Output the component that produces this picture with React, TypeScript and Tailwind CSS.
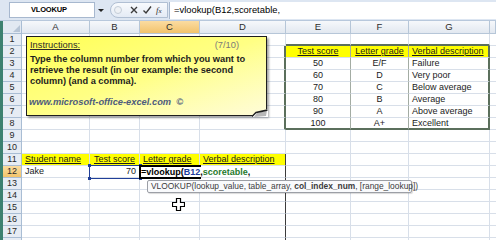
import React from 'react';

type CellDef = {
    text?: React.ReactNode;
    align?: 'l' | 'c' | 'r';
    yellow?: boolean;
    u?: boolean;
};

const COLS = ['A', 'B', 'C', 'D', 'E', 'F', 'G', 'H'];
const ROWS = Array.from({ length: 18 }, (_, i) => i + 1);

const scoreRows: [string, string, string][] = [
    ['50', 'E/F', 'Failure'],
    ['60', 'D', 'Very poor'],
    ['70', 'C', 'Below average'],
    ['80', 'B', 'Average'],
    ['90', 'A', 'Above average'],
    ['100', 'A+', 'Excellent'],
];

const cells: Record<string, CellDef> = {
    E2: { text: 'Test score', align: 'c', yellow: true, u: true },
    F2: { text: 'Letter grade', align: 'c', yellow: true, u: true },
    G2: { text: 'Verbal description', align: 'l', yellow: true, u: true },
    A11: { text: 'Student name', align: 'l', yellow: true, u: true },
    B11: { text: 'Test score', align: 'c', yellow: true, u: true },
    C11: { text: 'Letter grade', align: 'l', yellow: true, u: true },
    D11: { text: 'Verbal description', align: 'l', yellow: true, u: true },
    A12: { text: 'Jake', align: 'l' },
    B12: { text: '70', align: 'r' },
};
scoreRows.forEach(([score, grade, desc], i) => {
    cells[`E${i + 3}`] = { text: score, align: 'c' };
    cells[`F${i + 3}`] = { text: grade, align: 'c' };
    cells[`G${i + 3}`] = { text: desc, align: 'l' };
});

// borders of the cell: right then bottom
const rightBorder = (col: string, row: number) => {
    const inTable = row >= 2 && row <= 8;
    if ((col === 'D' || col === 'G') && inTable) return 'border-r-2 border-r-[#5b6f5c]';
    if (col === 'D' && row >= 11) return 'border-r border-r-[#3c3c3c]';
    if ((col === 'E' || col === 'F') && inTable) return 'border-r border-r-[#a3aca3]';
    return 'border-r border-r-[#d8dfe9]';
};

const bottomBorder = (col: string, row: number) => {
    const tableCol = col === 'E' || col === 'F' || col === 'G';
    if (tableCol && (row === 1 || row === 8)) return 'border-b-2 border-b-[#5b6f5c]';
    return 'border-b border-b-[#d8dfe9]';
};

const Cell: React.FC<{ col: string; row: number }> = ({ col, row }) => {
    const def = cells[`${col}${row}`];
    const align = def?.align === 'c' ? 'justify-center' : def?.align === 'r' ? 'justify-end' : 'justify-start';
    return (
        <div
            className={`relative flex items-center px-[3px] whitespace-nowrap text-[9px] leading-none text-[#1b1b1b] ${align} ${rightBorder(col, row)} ${bottomBorder(col, row)} ${def?.yellow ? 'bg-[#ffff00]' : ''}`}
        >
            {def?.text && <span className={def.u ? 'underline underline-offset-[1px]' : ''}>{def.text}</span>}
            {col === 'C' && row === 12 && (
                <span className="absolute left-[1px] top-[1px] z-20 bg-white pr-[1px] text-[9px] font-bold leading-[10px] text-black">
                    =vlookup(<span className="text-[#1d3c9e]">B12</span>,<span className="text-[#1f7a2c]">scoretable</span>,
                </span>
            )}
        </div>
    );
};

const RowHeader: React.FC<{ row: number }> = ({ row }) => (
    <div className="flex">
        <div className="w-[3px] bg-[#3d8170]" />
        <div
            className={`flex flex-1 items-center justify-center border-r border-b border-[#a9bdd4] text-[9px] leading-none text-[#2a2a2a] ${
                row === 12 ? 'bg-linear-to-b from-[#fbdc9f] to-[#f3c46a]' : 'bg-[#e6ecf4]'
            }`}
        >
            {row < 18 ? row : ''}
        </div>
    </div>
);

const FormulaBar: React.FC = () => (
    <div className="flex h-[21px] items-center bg-[#dde6f2] border-b border-[#b8c8dc]">
        <div className="ml-[9px] flex h-[16px] w-[86px] items-center border border-[#a7b8cf] bg-white pl-[21px]">
            <span className="text-[7.5px] font-semibold leading-none tracking-[-0.2px] text-black">VLOOKUP</span>
        </div>
        <svg width="10" height="10" viewBox="0 0 10 10" className="ml-[1px]">
            <path d="M2 4 L8 4 L5 7 Z" fill="#222" />
        </svg>
        <div className="ml-[4px] flex h-[16px] w-[58px] items-center rounded-l-full border border-[#b0bfd3] bg-linear-to-b from-[#f8fafd] to-[#e4ebf5] pl-[3px]">
            <span className="h-[8px] w-[8px] rounded-full border border-[#c4cdd8] bg-[#eef1f5]" />
            <svg width="10" height="10" viewBox="0 0 10 10" className="ml-[7px]">
                <path d="M2 2 L8 8 M8 2 L2 8" stroke="#3b3b3b" strokeWidth="1.4" />
            </svg>
            <svg width="10" height="10" viewBox="0 0 10 10" className="ml-[3px]">
                <path d="M1.5 5.5 L4 8 L9 1.5" stroke="#3b3b3b" strokeWidth="1.4" fill="none" />
            </svg>
            <span className="ml-[4px] font-['Liberation_Serif',serif] text-[9px] italic leading-none text-[#333]">
                f<span className="text-[7px]">x</span>
            </span>
        </div>
        <div className="ml-[1px] flex h-[17px] flex-1 items-center border-l border-[#a7b8cf] bg-white pl-[4px]">
            <span className="text-[9.4px] leading-none text-black">=vlookup(B12,scoretable,</span>
        </div>
    </div>
);

const Note: React.FC = () => (
    <div className="absolute left-[26px] top-[36px] z-10 h-[80px] w-[241px] border-[1.5px] border-[#1e1e1e] bg-linear-to-br from-[#ffff50] via-[#ffff84] to-[#fffcd8] shadow-[2px_2px_2px_rgba(0,0,0,0.35)]">
        <div className="flex items-center justify-between pl-[3px] pr-[27px] pt-[4px]">
            <span className="text-[9.3px] leading-none text-[#2a2a2a] underline underline-offset-[1px]">Instructions:</span>
            <span className="text-[9.3px] leading-none text-[#7a7a7a]">(7/10)</span>
        </div>
        <p className="mt-[4px] pl-[3px] text-[9.25px] font-bold leading-[11px] text-[#1d1d1d]">
            Type the column number from which you want to
            <br />
            retrieve the result (in our example: the second
            <br />
            column) (and a comma).
        </p>
        <div className="mt-[11px] pl-[2px] text-[9.3px] font-bold italic leading-none text-[#4d5b7d]">
            www.microsoft-office-excel.com&nbsp;&nbsp;©
        </div>
        <svg width="16" height="8" viewBox="0 0 16 8" className="absolute -bottom-[2px] -right-[2px]">
            <path d="M0 8 L4 3 Q9 2 16 0 L16 8 Z" fill="#ffffff" />
            <path d="M2 8 L5 4 Q10 3 15 1.5 L14 7 Z" fill="#b8b8b8" />
            <path d="M0 7.5 L4 3.5 Q9 2.5 15.5 1" stroke="#1e1e1e" strokeWidth="1.4" fill="none" />
        </svg>
    </div>
);

const App: React.FC = () => {
    return (
        <div className="relative h-[240px] w-[496px] overflow-hidden bg-white font-['Liberation_Sans',Arial,sans-serif]">
            <FormulaBar />
            <div className="grid grid-cols-[22px_68px_50px_60px_86px_65px_58px_81px_6px] grid-rows-[13px_repeat(18,12px)]">
                {/* column headers */}
                <div className="flex">
                    <div className="w-[3px] bg-[#3d8170]" />
                    <div className="relative flex-1 border-r border-b border-[#a9bdd4] bg-[#e2e9f2]">
                        <svg width="7" height="7" viewBox="0 0 7 7" className="absolute bottom-[1px] right-[1px]">
                            <path d="M7 0 L7 7 L0 7 Z" fill="#b7c5d6" />
                        </svg>
                    </div>
                </div>
                {COLS.map((c) => (
                    <div
                        key={c}
                        className={`flex items-center justify-center border-r border-b border-[#b6c6d8] text-[9.5px] leading-none text-[#2c2c2c] ${
                            c === 'C' ? 'bg-linear-to-b from-[#fbdca1] to-[#f2c36b]' : 'bg-linear-to-b from-[#f6f8fb] to-[#e2e8f0]'
                        }`}
                    >
                        {c === 'H' ? '' : c}
                    </div>
                ))}
                {ROWS.map((r) => (
                    <React.Fragment key={r}>
                        <RowHeader row={r} />
                        {COLS.map((c) => (
                            <Cell key={c} col={c} row={r} />
                        ))}
                    </React.Fragment>
                ))}
            </div>

            <Note />

            {/* B12 reference highlight */}
            <div className="pointer-events-none absolute left-[89px] top-[165px] z-10 h-[14px] w-[52px] border border-[#213f98]">
                <span className="absolute -left-[2px] -top-[2px] h-[3px] w-[3px] bg-[#213f98]" />
                <span className="absolute -bottom-[2px] -left-[2px] h-[3px] w-[3px] bg-[#213f98]" />
                <span className="absolute -right-[2px] -top-[2px] h-[3px] w-[3px] bg-[#213f98]" />
                <span className="absolute -bottom-[2px] -right-[2px] h-[3px] w-[3px] bg-[#213f98]" />
            </div>

            {/* active cell C12 */}
            <div className="pointer-events-none absolute left-[139px] top-[165px] z-10 h-[14px] w-[62px] border-2 border-black" />

            {/* function tooltip */}
            <div className="absolute left-[147px] top-[180px] z-30 h-[13px] w-[265px] whitespace-nowrap rounded-[2px] border border-[#9c9fa6] bg-[#f9fafc] pl-[3px] text-[8.4px] leading-[11px] text-[#3c3c3c] shadow-[1px_1px_1px_rgba(0,0,0,0.15)]">
                VLOOKUP(lookup_value, table_array, <span className="font-bold">col_index_num</span>, [range_lookup])
            </div>

            {/* fat cross cursor */}
            <svg width="13" height="13" viewBox="0 0 13 13" className="absolute left-[172px] top-[198px] z-30">
                <path
                    d="M4.5 0.5 H8.5 V4.5 H12.5 V8.5 H8.5 V12.5 H4.5 V8.5 H0.5 V4.5 H4.5 Z"
                    fill="#ffffff"
                    stroke="#000000"
                    strokeWidth="1.2"
                />
            </svg>
        </div>
    );
};

export default App;
